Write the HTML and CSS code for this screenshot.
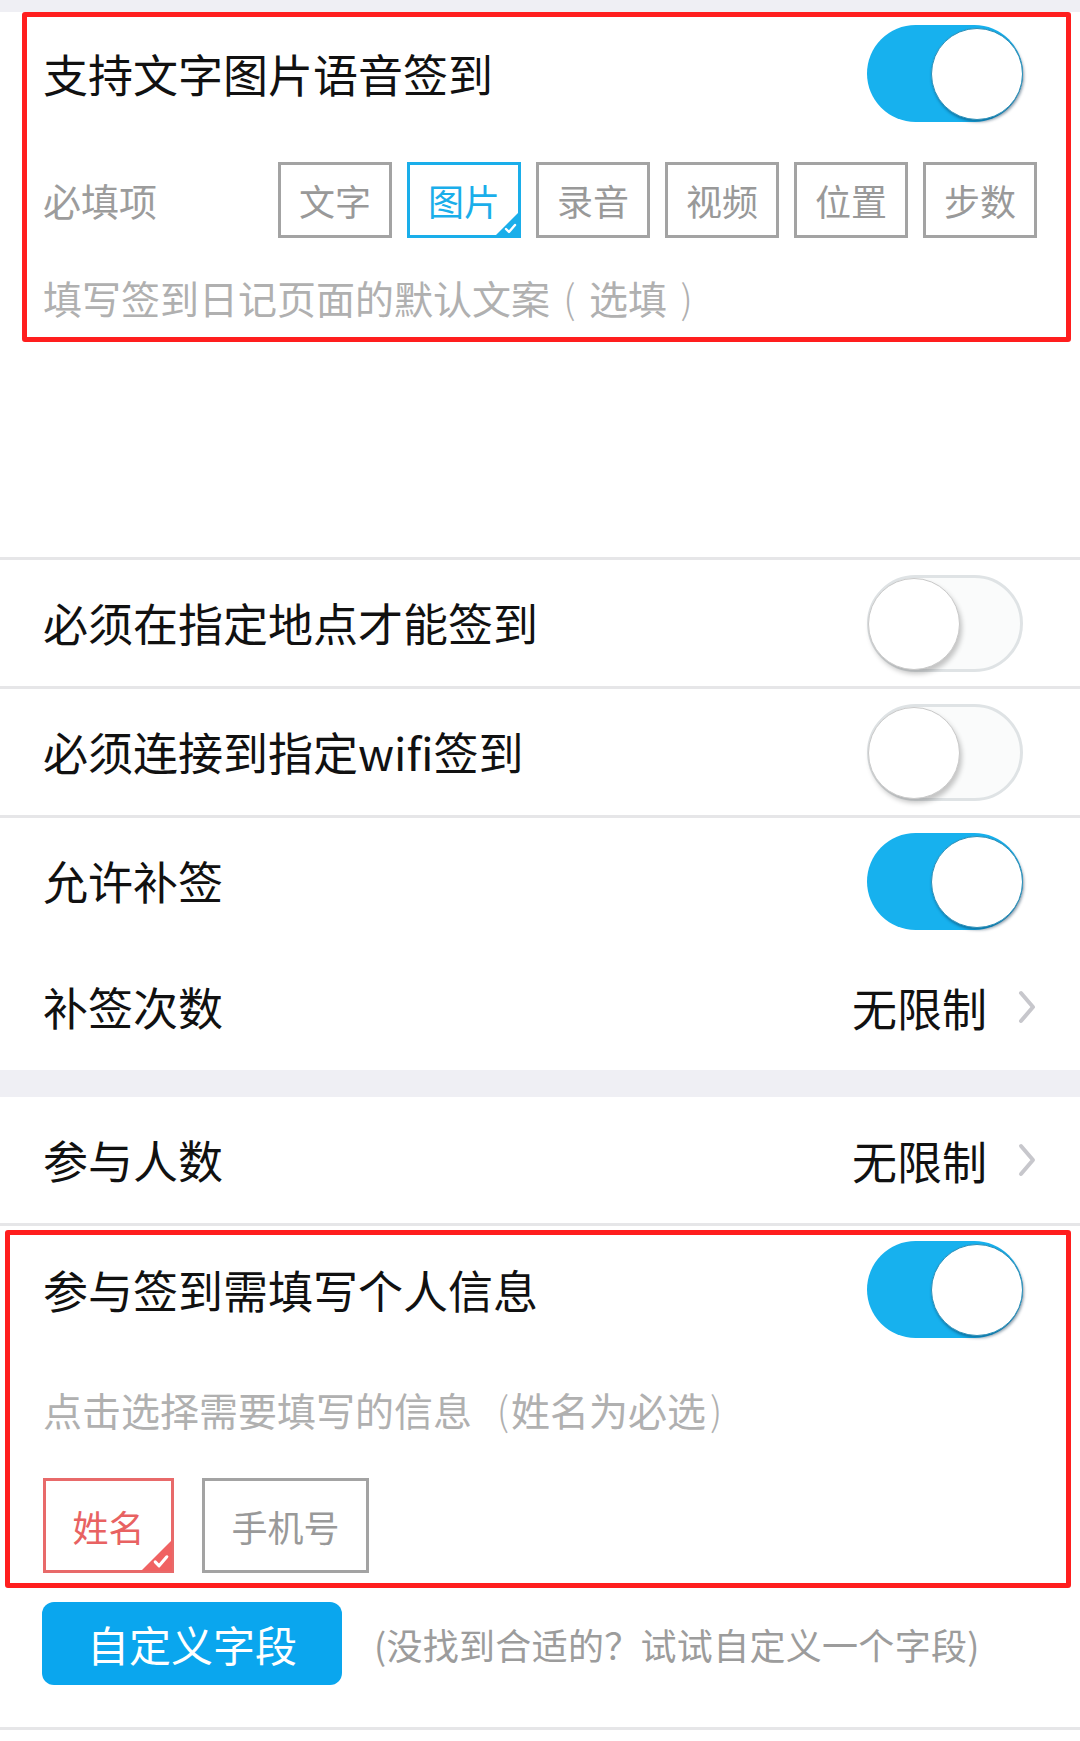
FILE: index.html
```html
<!DOCTYPE html>
<html lang="zh-CN">
<head>
<meta charset="utf-8">
<title>签到设置</title>
<link rel="stylesheet" href="styles.css">
</head>
<body>
<div class="page">
  <div class="band-top"></div>

  <section class="block block-types">
    <div class="head">
      <span class="title">支持文字图片语音签到</span>
      <span class="toggle on"><span class="knob"></span></span>
    </div>
    <div class="req-row">
      <span class="req-label">必填项</span>
      <div class="chips">
        <span class="chip">文字</span>
        <span class="chip sel-blue">图片<svg class="corner" viewBox="0 0 24 24"><polygon points="24,0 24,24 0,24" fill="#1aaeea"/><polyline points="11,17 14,20 20,13" fill="none" stroke="#fff" stroke-width="2.4" stroke-linecap="round" stroke-linejoin="round"/></svg></span>
        <span class="chip">录音</span>
        <span class="chip">视频</span>
        <span class="chip">位置</span>
        <span class="chip">步数</span>
      </div>
    </div>
    <div class="hint hint-1">填写签到日记页面的默认文案<span class="pc">(</span>选填<span class="pc">)</span></div>
    <div class="frame frame-1"></div>
  </section>

  <div class="divider"></div>
  <div class="row">
    <span class="title">必须在指定地点才能签到</span>
    <span class="toggle off"><span class="knob"></span></span>
  </div>
  <div class="divider"></div>
  <div class="row">
    <span class="title">必须连接到指定wifi签到</span>
    <span class="toggle off"><span class="knob"></span></span>
  </div>
  <div class="divider"></div>
  <div class="row">
    <span class="title">允许补签</span>
    <span class="toggle on"><span class="knob"></span></span>
  </div>
  <div class="row row-link">
    <span class="title">补签次数</span>
    <span class="value">无限制<svg class="chev" viewBox="0 0 20 34"><polyline points="4,3 16,17 4,31" fill="none" stroke="#c7c7cc" stroke-width="4" stroke-linecap="round" stroke-linejoin="round"/></svg></span>
  </div>
  <div class="band-gap"></div>
  <div class="row row-link">
    <span class="title">参与人数</span>
    <span class="value">无限制<svg class="chev" viewBox="0 0 20 34"><polyline points="4,3 16,17 4,31" fill="none" stroke="#c7c7cc" stroke-width="4" stroke-linecap="round" stroke-linejoin="round"/></svg></span>
  </div>
  <div class="divider"></div>

  <section class="block block-info">
    <div class="head head-2">
      <span class="title">参与签到需填写个人信息</span>
      <span class="toggle on"><span class="knob"></span></span>
    </div>
    <div class="hint hint-2">点击选择需要填写的信息<span class="po">(</span>姓名为必选<span class="pe">)</span></div>
    <div class="info-chips">
      <span class="chip chip-lg sel-red">姓名<svg class="corner corner-lg" viewBox="0 0 24 24"><polygon points="24,0 24,24 0,24" fill="#f06262"/><polyline points="11,17 14,20 20,13" fill="none" stroke="#fff" stroke-width="2.4" stroke-linecap="round" stroke-linejoin="round"/></svg></span>
      <span class="chip chip-lg chip-wide">手机号</span>
    </div>
    <div class="custom-row">
      <span class="btn">自定义字段</span>
      <span class="helper">(没找到合适的？试试自定义一个字段)</span>
    </div>
    <div class="frame frame-2"></div>
  </section>
  <div class="divider"></div>
  <div class="tail"></div>
</div>
</body>
</html>
```

FILE: styles.css
```css
* { box-sizing: border-box; }
html, body { margin: 0; padding: 0; background: #fff; }
body {
  font-family: "Noto Sans CJK SC", "Noto Sans", sans-serif;
  color: #111;
  width: 1080px;
}
.page { width: 1080px; }

.band-top { height: 12px; background: #efeff4; }
.band-gap { height: 27px; background: #efeff4; }
.divider { height: 3px; background: #e6e6e8; }
.tail { height: 11px; background: #fff; }

.block { position: relative; background: #fff; }
.block-types { height: 545px; }
.block-info { height: 501px; }

.title { font-size: 45px; line-height: 60px; color: #111; }

.head {
  display: flex;
  justify-content: space-between;
  align-items: center;
  padding: 13px 57px 0 43px;
  height: 110px;
}
.head-2 { padding-top: 15px; height: 112px; }

.req-row {
  display: flex;
  justify-content: space-between;
  align-items: center;
  padding: 0 43px;
  margin-top: 40px;
}
.req-label { font-size: 38px; color: #9c9c9c; line-height: 50px; }
.chips { display: flex; gap: 15px; }

.chip {
  position: relative;
  display: flex;
  align-items: center;
  justify-content: center;
  width: 114px;
  height: 76px;
  border: 3px solid #a3a3a3;
  font-size: 36px;
  color: #999;
  background: #fff;
}
.sel-blue { border-color: #1aaeea; color: #1aaeea; }
.sel-red { border-color: #e86a6a; color: #e86262; }

.corner {
  position: absolute;
  right: -1px;
  bottom: -1px;
  width: 24px;
  height: 24px;
}
.corner-lg { width: 31px; height: 31px; }

.hint { font-size: 39px; line-height: 50px; color: #b0b0b0; padding-left: 43px; white-space: nowrap; }
.hint-1 { margin-top: 34px; }
.hint-2 { margin-top: 46px; }
.pc, .po, .pe { display: inline-block; width: 1em; font-weight: 300; }
.pc { text-align: center; }
.po { text-align: right; padding-right: 2px; }
.pe { text-align: left; padding-left: 4px; }

.info-chips { display: flex; gap: 28px; padding-left: 43px; margin-top: 44px; }
.chip-lg { width: 131px; height: 95px; font-size: 36px; }
.chip-wide { width: 167px; }

.custom-row {
  display: flex;
  align-items: center;
  gap: 32px;
  padding-left: 42px;
  margin-top: 29px;
}
.btn {
  display: flex;
  align-items: center;
  justify-content: center;
  width: 300px;
  height: 83px;
  border-radius: 12px;
  background: #0aa6ee;
  color: #fff;
  font-size: 42px;
}
.helper { font-size: 36px; color: #9c9c9c; letter-spacing: 0.3px; }

.row {
  display: flex;
  justify-content: space-between;
  align-items: center;
  height: 126px;
  padding: 0 57px 0 43px;
  background: #fff;
}
.row-link { padding-right: 43px; }
.value { display: flex; align-items: center; gap: 30px; font-size: 45px; color: #111; }
.chev { width: 20px; height: 34px; }

.toggle {
  position: relative;
  display: block;
  width: 156px;
  height: 97px;
  border-radius: 49px;
}
.toggle.on { background: #17b1ee; }
.toggle.off { background: #fafbfb; border: 3px solid #dfe3e5; }
.knob {
  position: absolute;
  top: 3px;
  width: 92px;
  height: 92px;
  border-radius: 50%;
  background: #fff;
}
.toggle.on .knob {
  right: 0;
  box-shadow: 1px 2px 3px rgba(0, 40, 70, 0.45);
  border: 1px solid #2b8fb8;
}
.toggle.off .knob {
  left: -2px;
  top: 0;
  width: 92px;
  height: 92px;
  border: 1px solid #c9c9c9;
  box-shadow: 2px 4px 5px rgba(0, 0, 0, 0.22);
}

.frame {
  position: absolute;
  border: 5px solid #ff1e1e;
  border-radius: 3px;
  pointer-events: none;
}
.frame-1 { left: 22px; top: 0; width: 1049px; height: 330px; }
.frame-2 { left: 5px; top: 4px; width: 1066px; height: 358px; }
```
